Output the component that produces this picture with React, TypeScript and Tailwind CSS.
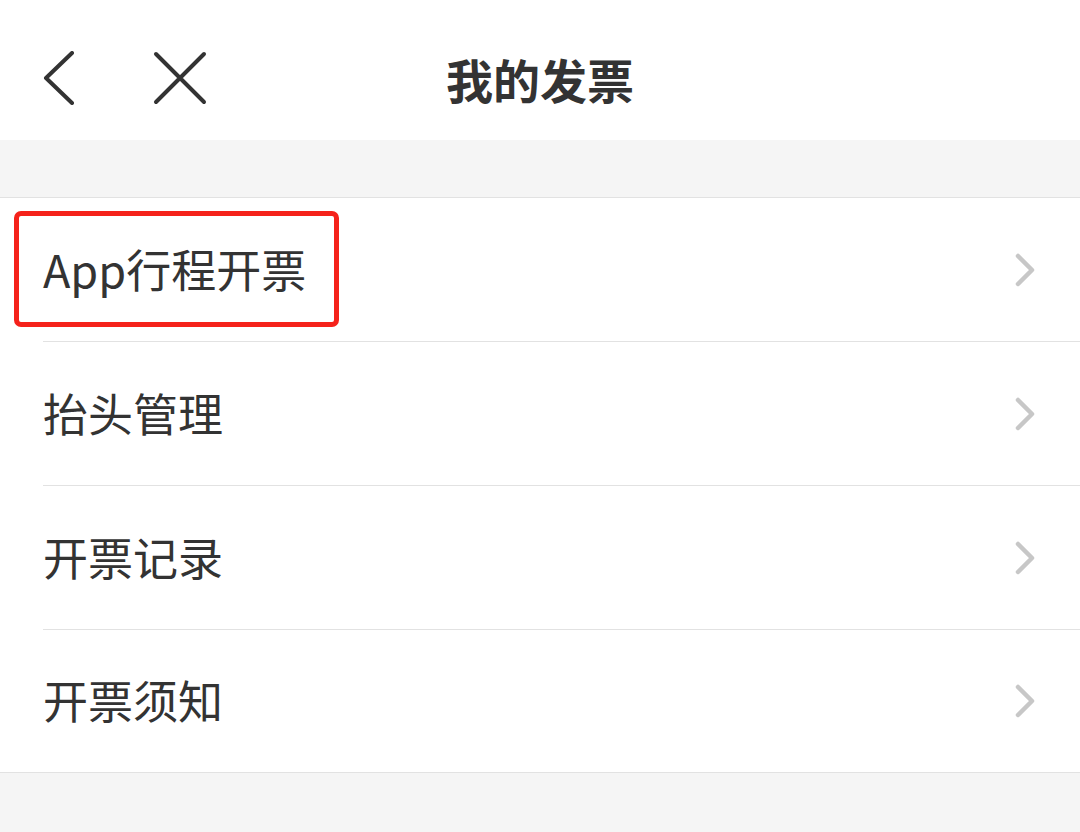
import React from "react";

const font = { fontFamily: '"Noto Sans CJK SC", "Noto Sans", sans-serif' };

function Chevron() {
  return (
    <svg width="24" height="36" viewBox="0 0 24 36" className="shrink-0">
      <path d="M5 4 L19 18 L5 32" fill="none" stroke="#c7c7c7" strokeWidth="4.5" strokeLinecap="round" strokeLinejoin="round" />
    </svg>
  );
}

const items = ["App行程开票", "抬头管理", "开票记录", "开票须知"];

export default function App() {
  return (
    <div className="w-[1080px] h-[832px] bg-[#f5f5f5] overflow-hidden text-[#333333]" style={font}>
      <header className="h-[140px] bg-white pt-[16px] flex items-center relative">
        <div className="flex items-center pl-[42px] gap-[77px]">
          <svg width="34" height="54" viewBox="0 0 34 54">
            <path d="M30 2 L4 27 L30 52" fill="none" stroke="#333" strokeWidth="4" strokeLinecap="round" strokeLinejoin="round" />
          </svg>
          <svg width="54" height="54" viewBox="0 0 54 54">
            <path d="M3 3 L51 51 M51 3 L3 51" fill="none" stroke="#333" strokeWidth="4" strokeLinecap="round" />
          </svg>
        </div>
        <div className="absolute left-0 right-0 top-[16px] bottom-0 flex items-center justify-center pointer-events-none">
          <span className="text-[47px] font-bold leading-none">我的发票</span>
        </div>
      </header>
      <div className="h-[57px]" />
      <div className="bg-white border-y border-[#e2e2e2]">
        {items.map((t, i) => (
          <div key={t} className="pl-[43px]">
            <div className={`${i < items.length - 1 ? "h-[144px] border-b border-[#e2e2e2]" : "h-[142px]"} flex items-center justify-between pr-[43px] relative`}>
              <span className="text-[45px] leading-none pb-[3px]">{t}</span>
              <Chevron />
              {i === 0 && (
                <div className="absolute left-[-29px] top-[13px] w-[325px] h-[116px] border-[5px] border-[#f5221b] rounded-[7px]" />
              )}
            </div>
          </div>
        ))}
      </div>
    </div>
  );
}
